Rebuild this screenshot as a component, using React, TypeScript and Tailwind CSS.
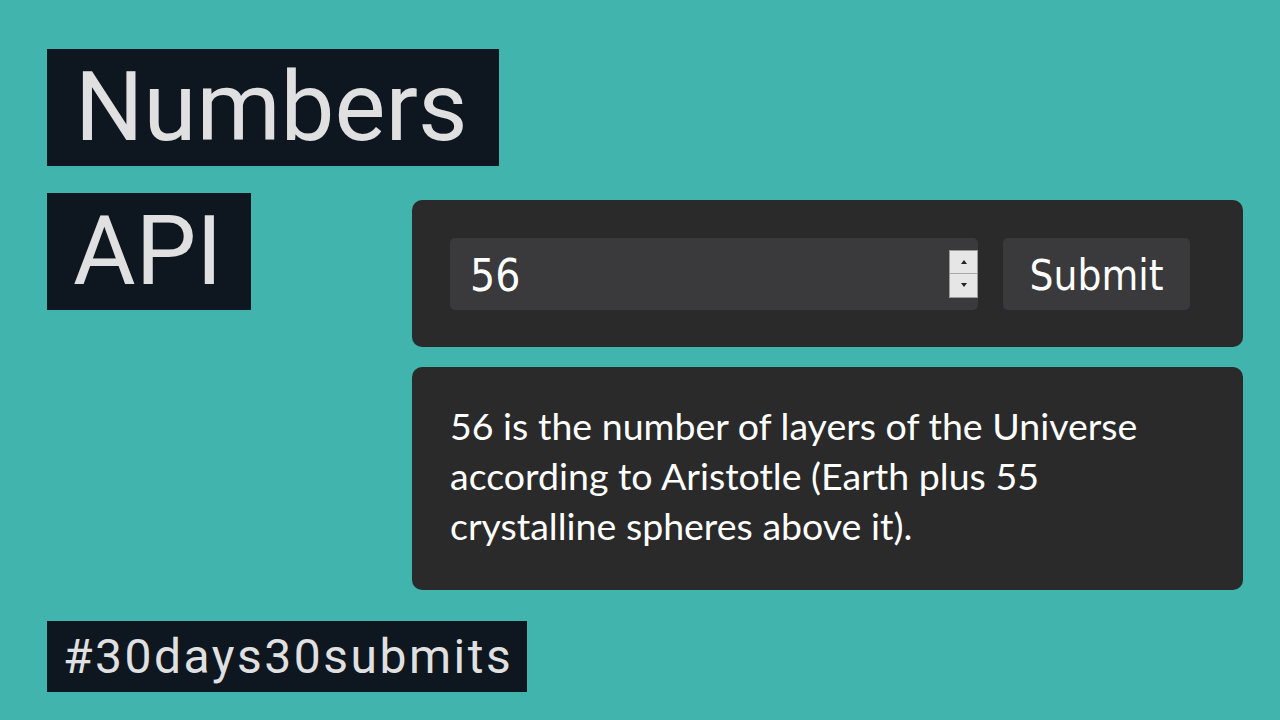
const label = "bg-[#0e1620] text-[#e0e0e0] font-['Roboto',sans-serif] w-max";

const Spinner = () => (
  <div className="flex flex-col w-[29px] h-[48px] border border-[#9a9a9a] bg-[#e6e6e6]">
    <div className="flex-1 flex items-center justify-center border-b border-[#a8a8a8]">
      <svg width="6" height="4" viewBox="0 0 6 4"><path d="M0 4 L3 0 L6 4 Z" fill="#222" /></svg>
    </div>
    <div className="flex-1 flex items-center justify-center">
      <svg width="6" height="4" viewBox="0 0 6 4"><path d="M0 0 L3 4 L6 0 Z" fill="#222" /></svg>
    </div>
  </div>
);

export default function App() {
  return (
    <div className="w-[1280px] h-[720px] bg-[#42b4ae] flex overflow-hidden">
      <div className="w-[412px] shrink-0 flex flex-col pl-[47px] pt-[49px] pb-[28px]">
        <div className={`${label} h-[117px] pl-[28px] pr-[32px] text-[96px] leading-[117px]`}>Numbers</div>
        <div className={`${label} h-[117px] mt-[27px] pl-[26px] pr-[29px] text-[96px] leading-[117px]`}>API</div>
        <div className={`${label} h-[71px] mt-auto pl-[16px] pr-[14px] text-[48px] leading-[71px] tracking-[2.5px]`}>#30days30submits</div>
      </div>

      <div className="w-[831px] pt-[200px] flex flex-col gap-[20px]">
        <div className="bg-[#2a2a2a] rounded-[10px] h-[147px] pl-[38px] pr-[53px] flex items-center gap-[25px]">
          <div className="flex-1 h-[72px] bg-[#3a3a3c] rounded-[5px] flex items-center pl-[20px] pr-0">
            <span className="flex-1 text-white text-[44px] leading-none pt-[4px] font-['DejaVu_Sans_Condensed','DejaVu_Sans',sans-serif]">56</span>
            <Spinner />
          </div>
          <button className="w-[187px] h-[72px] bg-[#3a3a3c] rounded-[5px] text-white text-[42px] leading-none pt-[4px] font-['DejaVu_Sans_Condensed','DejaVu_Sans',sans-serif]">
            Submit
          </button>
        </div>

        <div className="bg-[#2a2a2a] rounded-[10px] h-[223px] px-[38px] pt-[34px]">
          <p className="text-white text-[37.5px] leading-[50px] font-['Lato',sans-serif] max-w-[700px]">
            56 is the number of layers of the Universe according to Aristotle (Earth plus 55 crystalline spheres above it).
          </p>
        </div>
      </div>
    </div>
  );
}
